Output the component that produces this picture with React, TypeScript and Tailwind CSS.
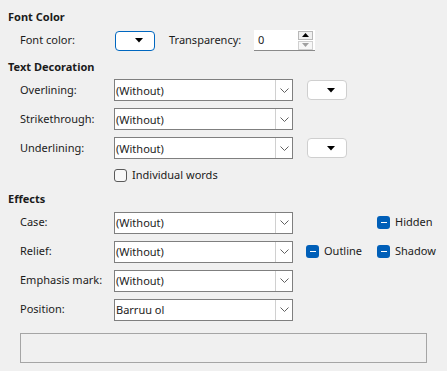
import React from 'react';

const font = { fontFamily: '"Segoe UI", "Noto Sans", Arial, sans-serif' };

function Chevron() {
    return (
        <svg width="9" height="5" viewBox="0 0 9 5" fill="none">
            <path d="M0.5 0.5 L4.5 4.5 L8.5 0.5" stroke="#606060" strokeWidth="1" />
        </svg>
    );
}

function Caret() {
    return (
        <svg width="8" height="5" viewBox="0 0 8 5">
            <path d="M0 0 H8 L4 4.5 Z" fill="#000" />
        </svg>
    );
}

function Select({ value }: { value: string }) {
    return (
        <div className="flex h-[22px] w-[179px] items-center border border-[#7f7f7f] bg-white">
            <span className="flex-1 pl-[1px] leading-none">{value}</span>
            <div className="flex h-[20px] w-[17px] items-center justify-center border-l border-[#d0d0d0] bg-white">
                <Chevron />
            </div>
        </div>
    );
}

function ColorButton({ focused = false }: { focused?: boolean }) {
    return (
        <div
            className={`flex h-[20px] w-[40px] items-center justify-end rounded-[4px] border bg-white pr-[11px] ${
                focused ? 'border-[#0067c0]' : 'border-[#cfcfcf]'
            }`}
        >
            <Caret />
        </div>
    );
}

function TriBox({ label }: { label: string }) {
    return (
        <div className="flex items-center gap-[5px]">
            <div className="flex h-[13px] w-[13px] items-center justify-center rounded-[3px] bg-[#005fb8]">
                <div className="h-[1.5px] w-[6px] bg-white" />
            </div>
            <span>{label}</span>
        </div>
    );
}

function Header({ children }: { children: React.ReactNode }) {
    return <div className="pl-[8px] font-bold leading-[16px]">{children}</div>;
}

function Row({ label, children }: { label: string; children: React.ReactNode }) {
    return (
        <div className="flex items-center pl-[20px]">
            <span className="w-[94px] shrink-0">{label}</span>
            {children}
        </div>
    );
}

export default function App() {
    return (
        <div style={font} className="h-[371px] w-[447px] overflow-hidden bg-[#f0f0f0] text-[11px] text-[#1b1b1b]">
            <div className="pt-[9px]">
                <Header>Font Color</Header>

                <div className="mt-[5px] flex h-[21px] items-center pl-[20px]">
                    <span className="w-[95px] shrink-0">Font color:</span>
                    <ColorButton focused />
                    <span className="ml-[14px] w-[85px]">Transparency:</span>
                    <div className="flex h-[21px] w-[61px] items-center border-b border-[#8a8a8a] bg-white">
                        <span className="flex-1 pl-[4px]">0</span>
                        <div className="mr-[2px] flex flex-col gap-[1px]">
                            <div className="flex h-[9px] w-[15px] items-center justify-center border border-[#b8b8b8] bg-[#f0f0f0]">
                                <svg width="7" height="4" viewBox="0 0 7 4"><path d="M0 4 H7 L3.5 0 Z" fill="#000" /></svg>
                            </div>
                            <div className="flex h-[9px] w-[15px] items-center justify-center border border-[#d0d0d0] bg-[#f7f7f7]">
                                <svg width="7" height="4" viewBox="0 0 7 4"><path d="M0 0 H7 L3.5 4 Z" fill="#a0a0a0" /></svg>
                            </div>
                        </div>
                    </div>
                </div>

                <div className="mt-[8px]">
                    <Header>Text Decoration</Header>
                </div>

                <div className="mt-[4px] flex flex-col gap-[7px]">
                    <Row label="Overlining:">
                        <Select value="(Without)" />
                        <div className="ml-[14px]">
                            <ColorButton />
                        </div>
                    </Row>
                    <Row label="Strikethrough:">
                        <Select value="(Without)" />
                    </Row>
                    <Row label="Underlining:">
                        <Select value="(Without)" />
                        <div className="ml-[14px]">
                            <ColorButton />
                        </div>
                    </Row>
                </div>

                <div className="mt-[8px] flex items-center gap-[5px] pl-[114px]">
                    <div className="h-[13px] w-[13px] rounded-[3px] border border-[#5a5a5a] bg-[#f8f8f8]" />
                    <span>Individual words</span>
                </div>

                <div className="mt-[7px]">
                    <Header>Effects</Header>
                </div>

                <div className="mt-[5px] flex flex-col gap-[7px]">
                    <Row label="Case:">
                        <Select value="(Without)" />
                        <div className="ml-[84px]">
                            <TriBox label="Hidden" />
                        </div>
                    </Row>
                    <Row label="Relief:">
                        <Select value="(Without)" />
                        <div className="ml-[13px] w-[71px]">
                            <TriBox label="Outline" />
                        </div>
                        <TriBox label="Shadow" />
                    </Row>
                    <Row label="Emphasis mark:">
                        <Select value="(Without)" />
                    </Row>
                    <Row label="Position:">
                        <Select value="Barruu ol" />
                    </Row>
                </div>

                <div className="ml-[20px] mt-[12px] h-[30px] w-[407px] border border-[#a5a5a5]" />
            </div>
        </div>
    );
}
